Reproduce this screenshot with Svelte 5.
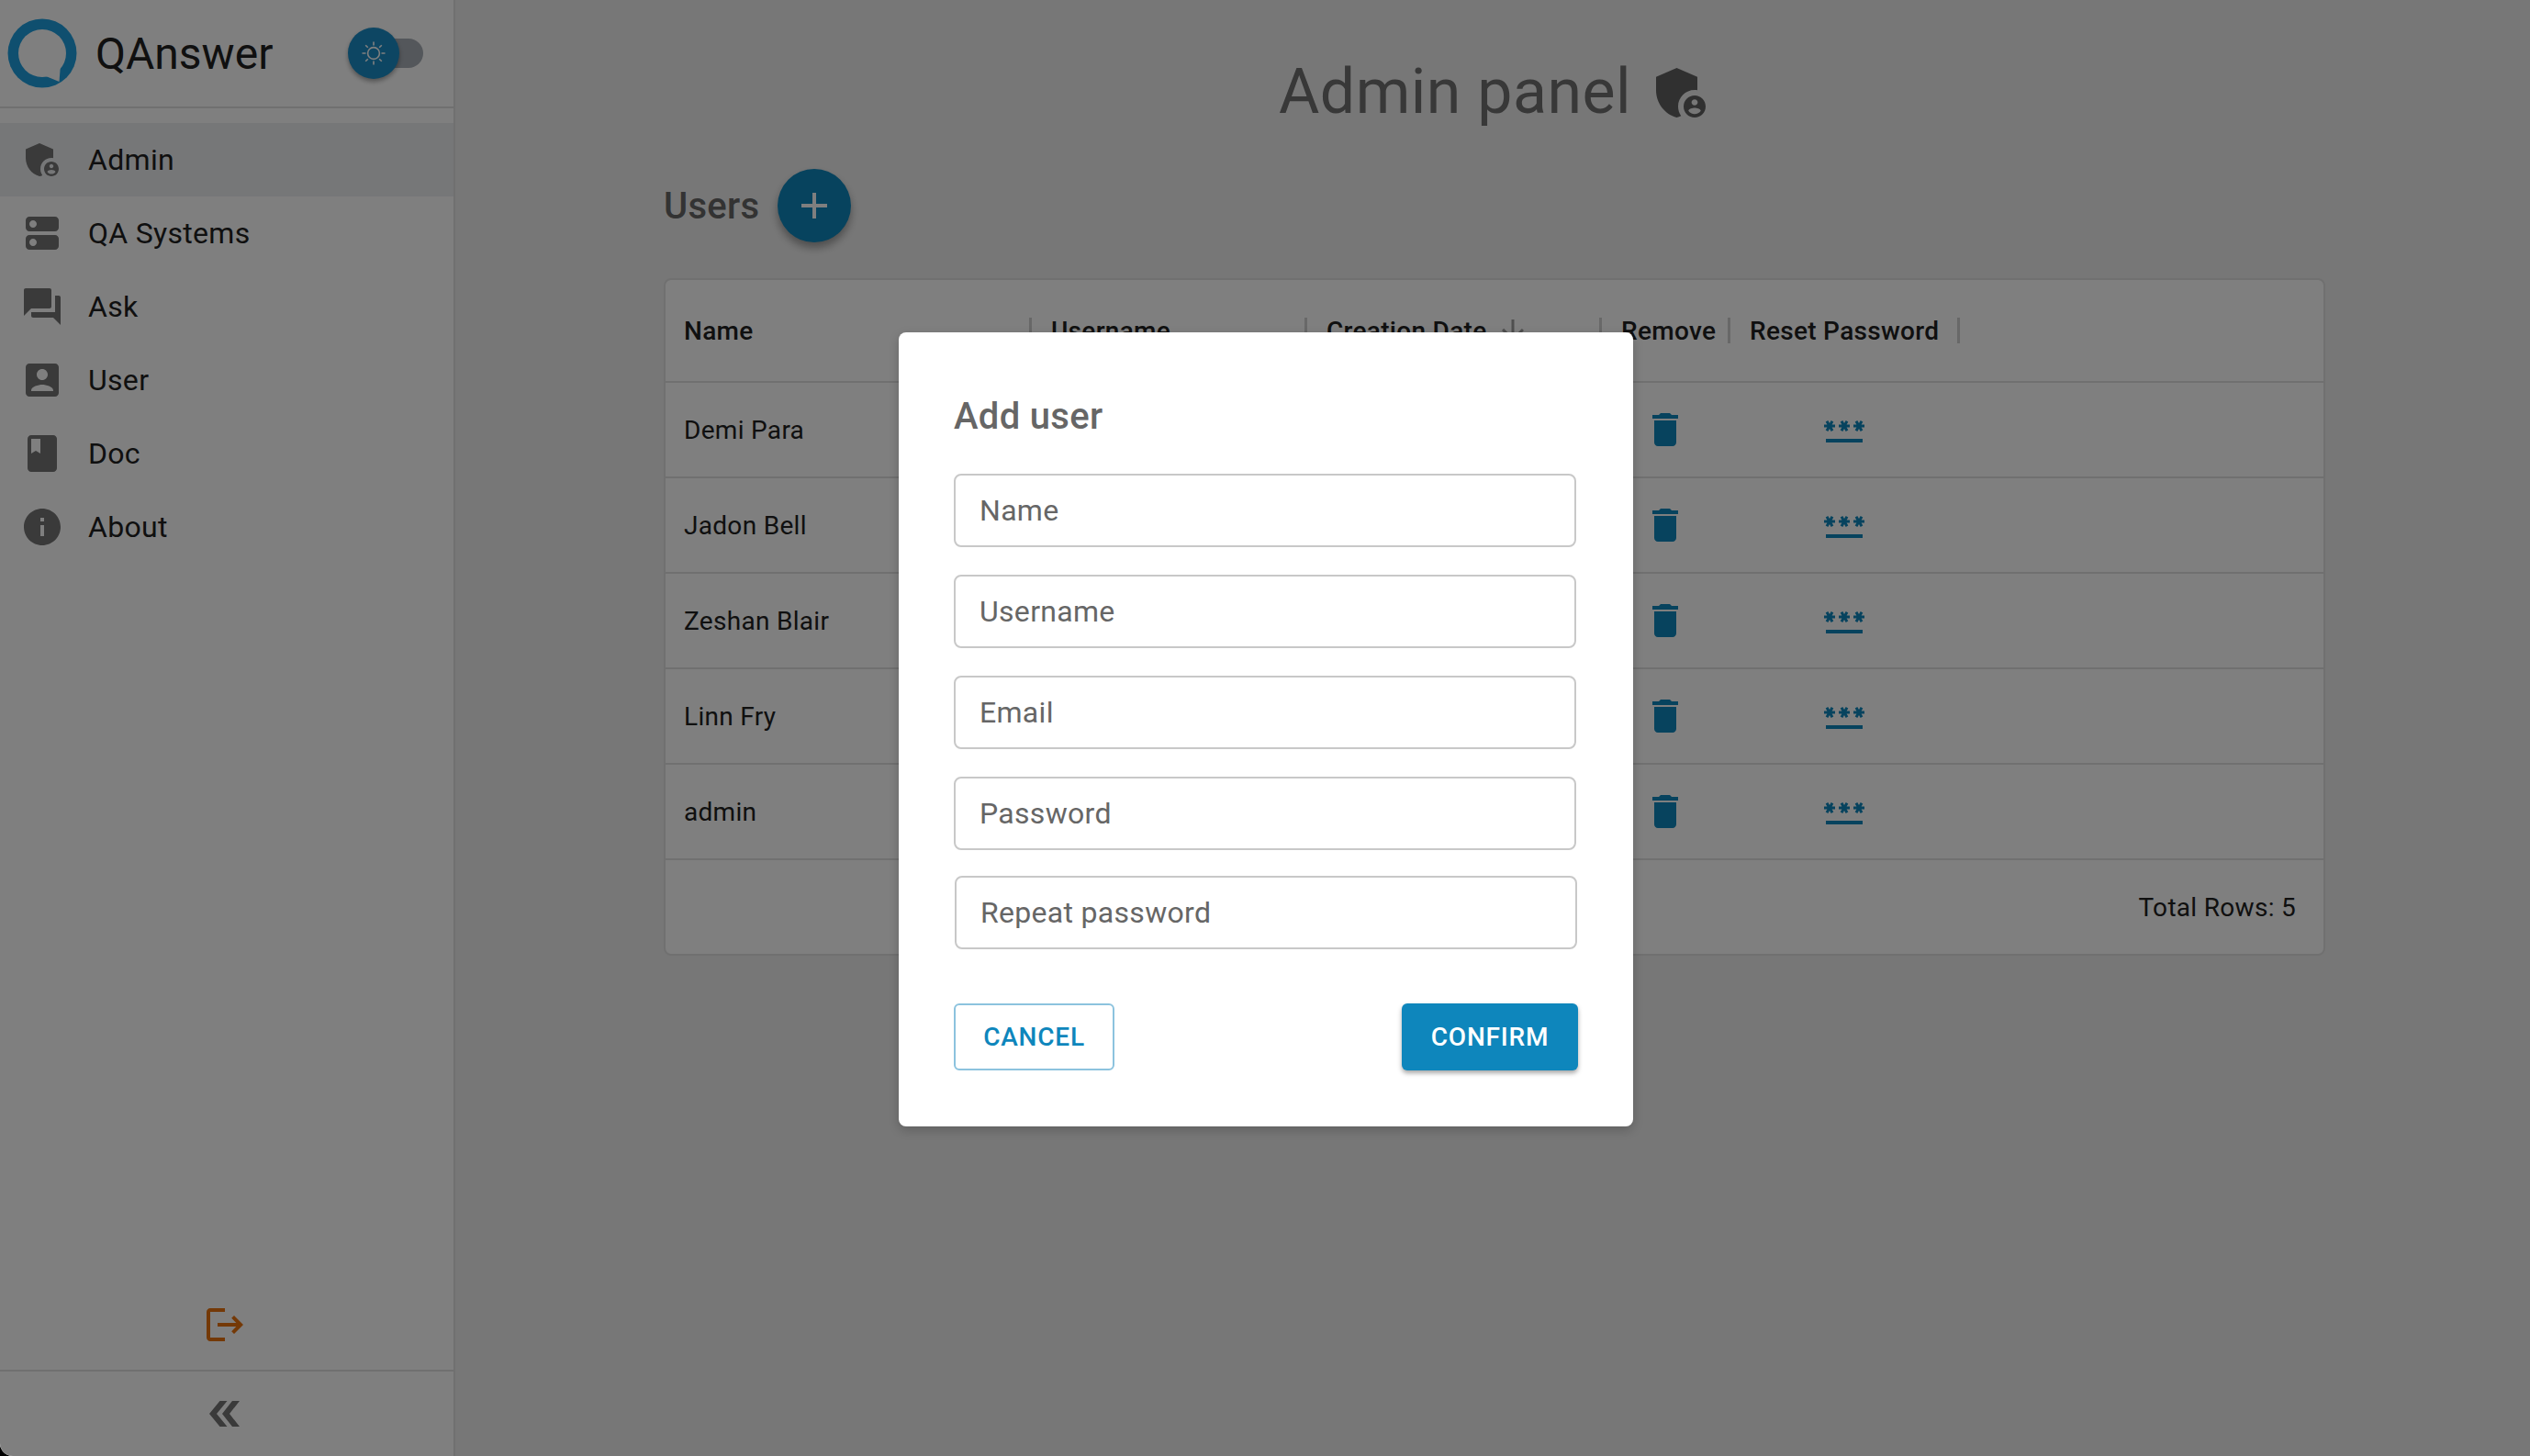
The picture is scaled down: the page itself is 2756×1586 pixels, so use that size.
<script>
  const shield = [
    'M17 11c.34 0 .67.04 1 .09V6.27L10.5 3 3 6.27v4.91c0 4.54 3.2 8.79 7.5 9.82.55-.13 1.08-.32 1.6-.55-.69-.98-1.1-2.17-1.1-3.45 0-3.31 2.69-6 6-6z',
    'M17 13c-2.21 0-4 1.79-4 4s1.79 4 4 4 4-1.79 4-4-1.79-4-4-4zm0 1.38c.62 0 1.12.51 1.12 1.12s-.51 1.12-1.12 1.12-1.12-.51-1.12-1.12.5-1.12 1.12-1.12zm0 5.37c-.93 0-1.74-.46-2.24-1.17.05-.72 1.51-1.08 2.24-1.08s2.19.36 2.24 1.08c-.5.71-1.31 1.17-2.24 1.17z'
  ].join('');

  const nav = [
    { label: 'Admin', d: shield, active: true },
    { label: 'QA Systems', d: 'M19 13H5c-1.1 0-2 .9-2 2v4c0 1.1.9 2 2 2h14c1.1 0 2-.9 2-2v-4c0-1.1-.9-2-2-2zM7 19c-1.1 0-2-.9-2-2s.9-2 2-2 2 .9 2 2-.9 2-2 2zM19 3H5c-1.1 0-2 .9-2 2v4c0 1.1.9 2 2 2h14c1.1 0 2-.9 2-2V5c0-1.1-.9-2-2-2zM7 9c-1.1 0-2-.9-2-2s.9-2 2-2 2 .9 2 2-.9 2-2 2z' },
    { label: 'Ask', d: 'M21 6h-2v9H6v2c0 .55.45 1 1 1h11l4 4V7c0-.55-.45-1-1-1zm-4 6V3c0-.55-.45-1-1-1H3c-.55 0-1 .45-1 1v14l4-4h10c.55 0 1-.45 1-1z' },
    { label: 'User', d: 'M19 3H5c-1.11 0-2 .9-2 2v14c0 1.1.89 2 2 2h14c1.1 0 2-.9 2-2V5c0-1.1-.9-2-2-2zm-7 3c1.66 0 3 1.34 3 3s-1.34 3-3 3-3-1.34-3-3 1.34-3 3-3zm6 12H6v-.4c0-2 4-3.1 6-3.1s6 1.1 6 3.1v.4z' },
    { label: 'Doc', d: 'M18 2H6c-1.1 0-2 .9-2 2v16c0 1.1.9 2 2 2h12c1.1 0 2-.9 2-2V4c0-1.1-.9-2-2-2zM6 4h5v8l-2.5-1.5L6 12V4z' },
    { label: 'About', d: 'M12 2C6.48 2 2 6.48 2 12s4.48 10 10 10 10-4.48 10-10S17.52 2 12 2zm1 15h-2v-6h2v6zm0-8h-2V7h2v2z' }
  ];

  const users = ['Demi Para', 'Jadon Bell', 'Zeshan Blair', 'Linn Fry', 'admin'];
  const fields = ['Name', 'Username', 'Email', 'Password', 'Repeat password'];

  const trash = 'M6 19c0 1.1.9 2 2 2h8c1.1 0 2-.9 2-2V7H6v12zM19 4h-3.5l-1-1h-5l-1 1H5v2h14V4z';
  const stars = 'M2 17h20v2H2v-2zm1.15-4.05L4 11.47l.85 1.48 1.3-.75-.85-1.48H7v-1.5H5.3l.85-1.47L4.85 7 4 8.47 3.15 7l-1.3.75.85 1.47H1v1.5h1.7l-.85 1.48 1.3.75zm6.7-.75 1.3.75.85-1.48.85 1.48 1.3-.75-.85-1.48H15v-1.5h-1.7l.85-1.47-1.3-.75L12 8.47 11.15 7l-1.3.75.85 1.47H9v1.5h1.7l-.85 1.48zM23 9.22h-1.7l.85-1.47-1.3-.75L20 8.47 19.15 7l-1.3.75.85 1.47H17v1.5h1.7l-.85 1.48 1.3.75.85-1.48.85 1.48 1.3-.75-.85-1.48H23v-1.5z';
</script>

<div class="page">
  <aside class="sidebar">
    <header class="brand">
      <svg class="logo" viewBox="0 0 76 76">
        <circle cx="38" cy="38" r="37.5" fill="#1e9fdf" />
        <circle cx="38" cy="38" r="26" fill="#fff" />
        <path d="M58 50L56.5 69 42 63 46 50z" fill="#fff" />
      </svg>
      <span class="brand-name">QAnswer</span>
      <div class="switch">
        <div class="track"></div>
        <div class="thumb">
          <svg viewBox="0 0 28 28" width="28" height="28" fill="none" stroke="#fff" stroke-width="1.6">
            <circle cx="14" cy="14" r="6.4" />
            <path d="M14 1.5v4M14 22.5v4M1.5 14h4M22.5 14h4M5.2 5.2l2.6 2.6M20.2 20.2l2.6 2.6M5.2 22.8l2.6-2.6M20.2 7.8l2.6-2.6" />
          </svg>
        </div>
      </div>
    </header>

    <nav class="nav">
      {#each nav as item}
        <div class="nav-item" class:active={item.active}>
          <svg class="icon" viewBox="0 0 24 24"><path d={item.d} /></svg>
          <span>{item.label}</span>
        </div>
      {/each}
    </nav>

    <div class="logout">
      <svg class="icon" viewBox="0 0 24 24">
        <path d="M17 7l-1.41 1.41L18.17 11H8v2h10.17l-2.58 2.58L17 17l5-5zM4 5h8V3H4c-1.1 0-2 .9-2 2v14c0 1.1.9 2 2 2h8v-2H4V5z" />
      </svg>
    </div>
    <div class="collapse">
      <svg viewBox="0 0 33 28" width="33" height="28">
        <path d="M0 14L11.5 0h8L8 14l11.5 14h-8zM14 14L25 0h8L22 14l11 14h-8z" />
      </svg>
    </div>
  </aside>

  <main class="main">
    <h1 class="title">
      Admin panel
      <svg viewBox="0 0 24 24" width="72" height="72"><path d={shield} /></svg>
    </h1>

    <div class="section-head">
      <h2>Users</h2>
      <button class="fab" aria-label="Add user">
        <svg viewBox="0 0 24 24" width="48" height="48"><path d="M19 13h-6v6h-2v-6H5v-2h6V5h2v6h6v2z" /></svg>
      </button>
    </div>

    <div class="table">
      <div class="row head">
        <div class="cell"><span>Name</span><i class="sep"></i></div>
        <div class="cell"><span>Username</span><i class="sep"></i></div>
        <div class="cell">
          <span class="sort">
            Creation Date
            <svg viewBox="0 0 24 24" width="36" height="36"><path d="M20 12l-1.41-1.41L13 16.17V4h-2v12.17l-5.58-5.6L4 12l8 8 8-8z" /></svg>
          </span>
          <i class="sep"></i>
        </div>
        <div class="cell"><span>Remove</span><i class="sep"></i></div>
        <div class="cell"><span>Reset Password</span><i class="sep"></i></div>
      </div>

      {#each users as name}
        <div class="row">
          <div class="cell">{name}</div>
          <div class="cell"></div>
          <div class="cell"></div>
          <div class="cell action-remove">
            <svg class="action" viewBox="0 0 24 24"><path d={trash} /></svg>
          </div>
          <div class="cell action-reset">
            <svg class="action" viewBox="0 0 24 24"><path d={stars} /></svg>
          </div>
        </div>
      {/each}

      <div class="table-footer">Total Rows: 5</div>
    </div>
  </main>

  <div class="backdrop">
    <div class="dialog">
      <h3>Add user</h3>
      <div class="fields">
        {#each fields as field}
          <input type="text" placeholder={field} />
        {/each}
      </div>
      <div class="actions">
        <button class="btn outlined">Cancel</button>
        <button class="btn contained">Confirm</button>
      </div>
    </div>
  </div>
</div>

<style>
  :global(body) {
    margin: 0;
    background: #000;
  }

  .page {
    position: relative;
    display: flex;
    height: 100vh;
    overflow: hidden;
    border-bottom-left-radius: 14px;
    background: #efefef;
    font-family: Roboto, "Liberation Sans", sans-serif;
    color: #212121;
  }

  .sidebar {
    display: flex;
    flex-direction: column;
    flex: none;
    box-sizing: border-box;
    width: 496px;
    background: #fff;
    border-right: 2px solid #e0e0e0;
  }

  .brand {
    display: flex;
    align-items: center;
    flex: none;
    box-sizing: border-box;
    height: 118px;
    padding-left: 8px;
    border-bottom: 2px solid #e0e0e0;
  }

  .logo {
    width: 76px;
    height: 76px;
    flex: none;
  }

  .brand-name {
    margin-left: 20px;
    font-size: 48px;
  }

  .switch {
    position: relative;
    width: 82px;
    height: 56px;
    margin-left: 82px;
  }

  .track {
    position: absolute;
    left: 14px;
    top: 12px;
    width: 68px;
    height: 32px;
    border-radius: 16px;
    background: #a9afb7;
  }

  .thumb {
    position: absolute;
    left: 0;
    top: 0;
    display: flex;
    align-items: center;
    justify-content: center;
    width: 56px;
    height: 56px;
    border-radius: 50%;
    background: #1a8cc6;
    box-shadow: 0 3px 5px rgba(0, 0, 0, 0.35);
  }

  .nav {
    display: flex;
    flex-direction: column;
    flex: 1;
    padding-top: 16px;
  }

  .nav-item {
    display: flex;
    align-items: center;
    height: 80px;
    padding-left: 22px;
    font-size: 32px;
    letter-spacing: 0.3px;
  }

  .nav-item.active {
    background: #edeff1;
  }

  .nav-item span {
    margin-left: 26px;
  }

  .icon {
    width: 48px;
    height: 48px;
    flex: none;
    fill: #757575;
  }

  .logout {
    display: flex;
    justify-content: center;
    padding-bottom: 25px;
  }

  .logout .icon {
    fill: #e8730f;
    margin-right: 4px;
  }

  .collapse {
    display: flex;
    justify-content: center;
    align-items: center;
    box-sizing: border-box;
    height: 94px;
    border-top: 2px solid #e0e0e0;
  }

  .collapse svg {
    fill: #757575;
    margin-right: 6px;
  }

  .main {
    flex: 1;
    min-width: 0;
    padding: 0 223px 0 227px;
  }

  .title {
    display: flex;
    align-items: center;
    justify-content: center;
    gap: 18px;
    margin: 0;
    height: 200px;
    padding-left: 4px;
    box-sizing: border-box;
    font-size: 68px;
    font-weight: 400;
    letter-spacing: 0.5px;
    color: #707070;
  }

  .title svg {
    fill: #616161;
    margin-top: 2px;
  }

  .section-head {
    display: flex;
    align-items: center;
    gap: 20px;
    height: 80px;
    margin-top: -16px;
  }

  .section-head h2 {
    margin: 0;
    font-size: 40px;
    font-weight: 500;
    color: #666;
    letter-spacing: 0.3px;
  }

  .fab {
    display: flex;
    align-items: center;
    justify-content: center;
    width: 80px;
    height: 80px;
    padding: 0;
    border: none;
    border-radius: 50%;
    background: #0e86bc;
    box-shadow: 0 6px 10px rgba(0, 0, 0, 0.35);
  }

  .fab svg {
    fill: #fff;
  }

  .table {
    box-sizing: border-box;
    height: 738px;
    margin-top: 39px;
    background: #fff;
    border: 2px solid #e0e0e0;
    border-radius: 8px;
    font-size: 28px;
  }

  .row {
    display: grid;
    grid-template-columns: 400px 300px 321px 140px 250px 1fr;
    box-sizing: border-box;
    height: 104px;
    border-bottom: 2px solid #e0e0e0;
  }

  .row.head {
    height: 112px;
    font-weight: 500;
  }

  .cell {
    display: flex;
    align-items: center;
    justify-content: space-between;
    box-sizing: border-box;
    padding-left: 20px;
    padding-right: 1px;
    letter-spacing: 0.3px;
  }

  .sort {
    display: flex;
    align-items: center;
    gap: 10px;
  }

  .sort svg {
    fill: #9e9e9e;
  }

  .sep {
    width: 3px;
    height: 28px;
    background: #d0d0d0;
  }

  .action-remove {
    justify-content: flex-start;
    padding-left: 44px;
  }

  .action-reset {
    justify-content: flex-start;
    padding-left: 99px;
  }

  .action {
    width: 48px;
    height: 48px;
    fill: #0e86bc;
  }

  .table-footer {
    display: flex;
    align-items: center;
    justify-content: flex-end;
    height: 102px;
    padding-right: 30px;
    letter-spacing: 0.3px;
  }

  .backdrop {
    position: absolute;
    inset: 0;
    display: flex;
    align-items: center;
    justify-content: center;
    background: rgba(0, 0, 0, 0.5);
  }

  .dialog {
    box-sizing: border-box;
    width: 800px;
    height: 865px;
    padding: 60px 62px 60px 60px;
    margin: 3px 0 0 2px;
    background: #fff;
    border-radius: 8px;
    box-shadow: 0 4px 12px rgba(0, 0, 0, 0.2);
  }

  h3 {
    margin: 2px 0 32px;
    font-size: 40px;
    line-height: 60px;
    font-weight: 500;
    letter-spacing: 0.3px;
    color: #666;
  }

  .fields {
    display: flex;
    flex-direction: column;
    gap: 30px;
  }

  input {
    box-sizing: border-box;
    width: 100%;
    height: 80px;
    padding: 0 26px;
    border: 2px solid #c8c8c8;
    border-radius: 8px;
    font-family: inherit;
    font-size: 32px;
    letter-spacing: 0.3px;
    outline: none;
  }

  input::placeholder {
    color: #666;
    opacity: 1;
  }

  input:last-child {
    margin: -2px 0 0 1px;
  }

  .actions {
    display: flex;
    justify-content: space-between;
    margin-top: 59px;
    margin-right: -2px;
  }

  .btn {
    box-sizing: border-box;
    height: 73px;
    border-radius: 6px;
    font-family: inherit;
    font-size: 28px;
    font-weight: 500;
    letter-spacing: 0.8px;
    text-transform: uppercase;
  }

  .outlined {
    width: 175px;
    border: 2px solid #8cc3de;
    background: #fff;
    color: #0e86bc;
  }

  .contained {
    width: 192px;
    border: none;
    background: #0e86bc;
    color: #fff;
    box-shadow: 0 3px 5px rgba(0, 0, 0, 0.35);
  }
</style>
